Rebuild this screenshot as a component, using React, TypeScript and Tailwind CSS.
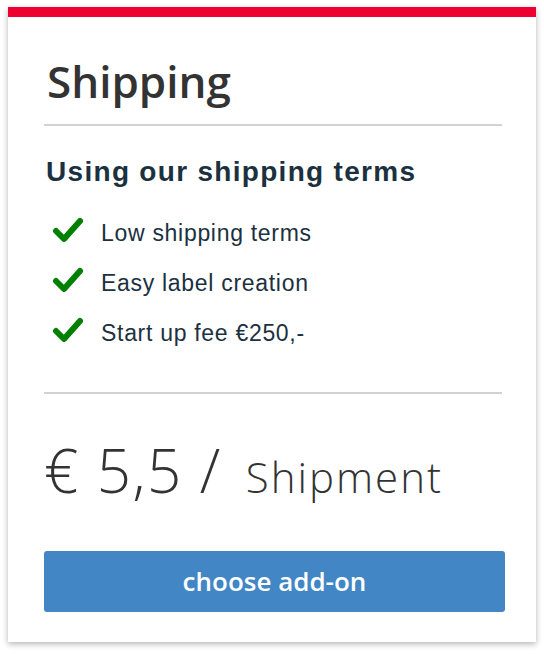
export default function App() {
  const items = ["Low shipping terms", "Easy label creation", "Start up fee €250,-"]

  return (
    <div className="min-h-screen bg-white pt-[7px] px-[8px]">
      <div className="w-[528px] h-[635px] bg-white shadow-[0_2px_6px_rgba(0,0,0,0.3)] flex flex-col">
        <div className="h-[10px] bg-[#ee0030]" />

        <div className="pl-[36px] pr-[34px] flex flex-col">
          <h1 className="mt-[34px] text-[44px] leading-[60px] font-semibold text-[#333333] font-['Open_Sans',sans-serif] pl-[3px]">
            Shipping
          </h1>

          <div className="mt-[13px] h-[2px] bg-[#d2d2d2]" />

          <h2 className="mt-[29px] text-[28px] leading-[34px] font-bold tracking-[1.3px] text-[#1b3140] font-['Liberation_Sans',Arial,sans-serif] pl-[2px]">
            Using our shipping terms
          </h2>

          <ul className="mt-[19px] flex flex-col">
            {items.map((item) => (
              <li key={item} className="h-[50px] flex items-center">
                <svg width="32" height="26" viewBox="0 0 32 26" className="ml-[8px] mr-[17px] -mt-[6px]">
                  <path d="M4 14 L12 22 L28 4" fill="none" stroke="#008000" strokeWidth="6" strokeLinecap="round" strokeLinejoin="round" />
                </svg>
                <span className="text-[23px] tracking-[0.7px] text-[#1b3140] font-['Liberation_Sans',Arial,sans-serif]">
                  {item}
                </span>
              </li>
            ))}
          </ul>

          <div className="mt-[34px] h-[2px] bg-[#d2d2d2]" />

          <div className="mt-[41px] flex items-baseline text-[#333333] font-['Open_Sans',sans-serif] font-light">
            <span className="text-[60px] leading-[70px] tracking-[1.5px]">€ 5,5 /</span>
            <span className="ml-[24px] text-[42px] tracking-[2px]">Shipment</span>
          </div>

          <button className="mt-[43px] h-[61px] w-[461px] rounded-[3px] bg-[#4286c6] text-white text-[26px] font-semibold font-['Open_Sans',sans-serif]">
            choose add-on
          </button>
        </div>
      </div>
    </div>
  )
}
